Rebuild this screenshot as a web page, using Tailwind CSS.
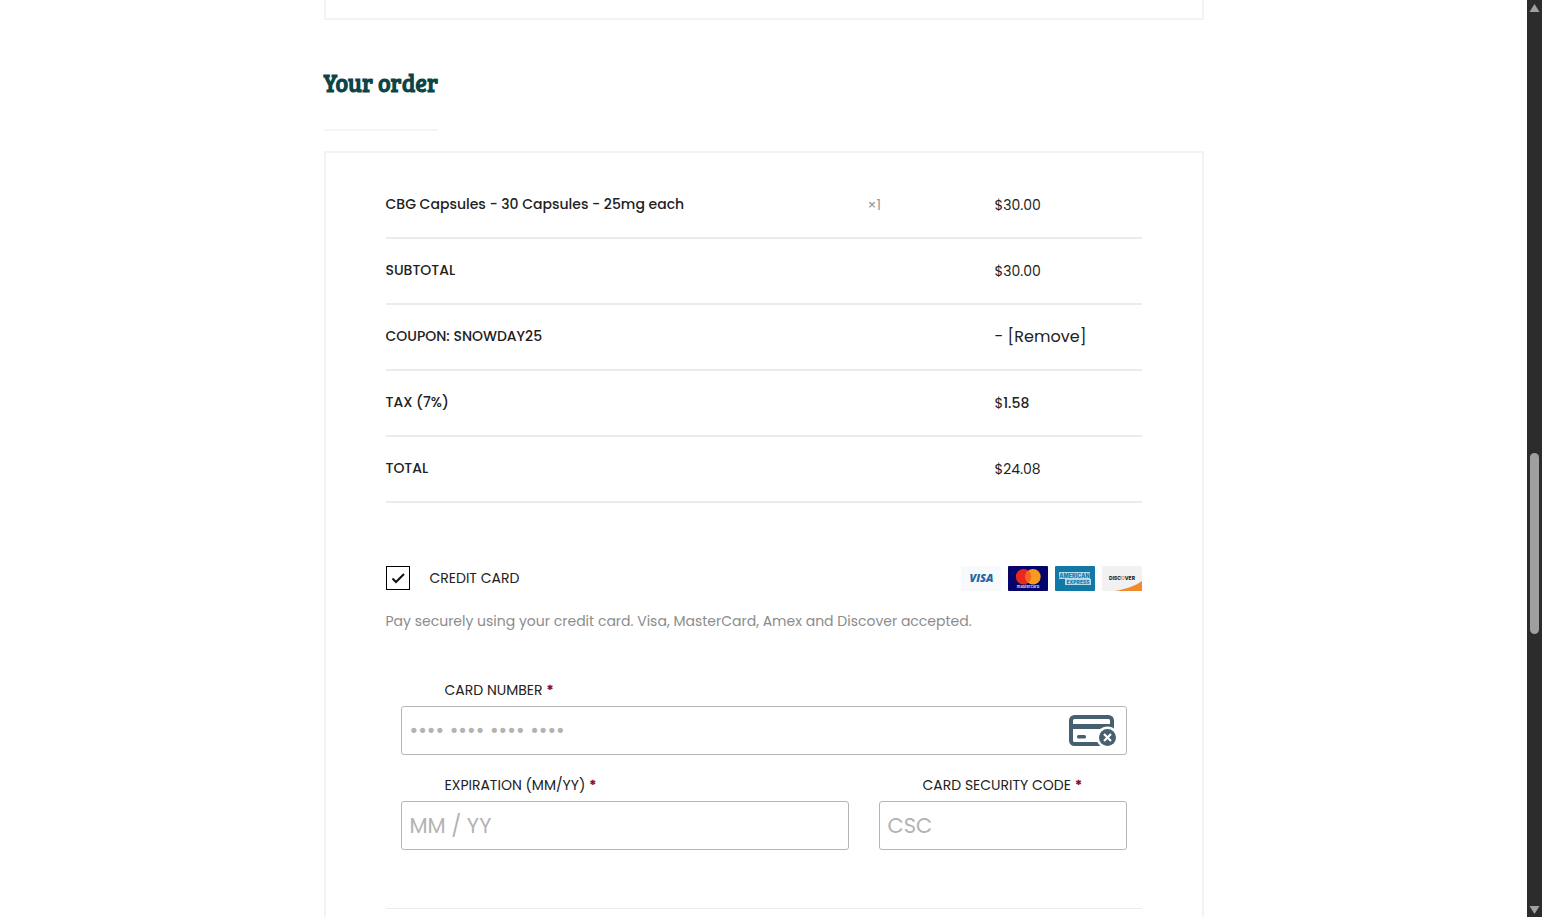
<!DOCTYPE html>
<html lang="en">
<head>
    <meta charset="UTF-8">
    <meta name="viewport" content="width=device-width, initial-scale=1.0">
    <title>Checkout</title>
    <script src="https://cdn.jsdelivr.net/npm/@tailwindcss/browser@4"></script>
</head>
<body class="flex h-screen overflow-hidden bg-white font-[Poppins,Inter,sans-serif] text-[14px] leading-6 text-[#222]">
    <main class="min-w-0 flex-1 overflow-hidden">
        <div class="mx-auto max-w-[880px]">
            <!-- End of the billing box -->
            <div class="h-5 border-2 border-t-0 border-[#f3f3f3]"></div>

            <h2 class="mt-[47px] inline-block border-b-2 border-[#f5f5f5] pb-[30px] font-['Bree_Serif','DejaVu_Sans',sans-serif] text-[24px] leading-8 font-bold text-[#0d4547]">Your order</h2>

            <!-- Order review -->
            <div class="mt-5 border-2 border-[#f3f3f3] px-[60px] pt-[19px] pb-40">
                <table class="w-full table-fixed border-collapse text-left">
                    <colgroup>
                        <col>
                        <col class="w-[127px]">
                        <col class="w-[147px]">
                    </colgroup>
                    <tbody>
                        <tr class="h-[66px] border-b-2 border-[#ebebeb]">
                            <th scope="row" class="pb-0.5 font-medium">CBG Capsules - 30 Capsules - 25mg each</th>
                            <td class="text-[#999]">×1</td>
                            <td>$30.00</td>
                        </tr>
                        <tr class="h-[66px] border-b-2 border-[#ebebeb]">
                            <th scope="row" colspan="2" class="pb-0.5 font-medium uppercase">Subtotal</th>
                            <td>$30.00</td>
                        </tr>
                        <tr class="h-[66px] border-b-2 border-[#ebebeb]">
                            <th scope="row" colspan="2" class="pb-0.5 font-medium uppercase">Coupon: snowday25</th>
                            <td class="text-[16px]">- <a href="#">[Remove]</a></td>
                        </tr>
                        <tr class="h-[66px] border-b-2 border-[#ebebeb]">
                            <th scope="row" colspan="2" class="pb-0.5 font-medium uppercase">Tax (7%)</th>
                            <td>$<span class="font-medium">1.58</span></td>
                        </tr>
                        <tr class="h-[66px] border-b-2 border-[#ebebeb]">
                            <th scope="row" colspan="2" class="pb-0.5 font-medium uppercase">Total</th>
                            <td>$24.08</td>
                        </tr>
                    </tbody>
                </table>

                <!-- Payment method -->
                <div class="mt-[63px] flex items-start justify-between">
                    <label for="payment" class="flex items-center gap-5 uppercase">
                        <span class="grid size-6">
                            <input id="payment" type="checkbox" checked class="col-start-1 row-start-1 size-6 appearance-none border border-black">
                            <svg class="pointer-events-none col-start-1 row-start-1 size-6" viewBox="0 0 24 24" fill="none" stroke="#111" stroke-width="2">
                                <path d="M6.5 12.5l3.5 3.5 8-8" />
                            </svg>
                        </span>
                        Credit Card
                    </label>
                    <div class="flex gap-[7px]">
                        <svg class="h-[25px] w-10" viewBox="0 0 40 25" role="img" aria-label="Visa">
                            <rect width="40" height="25" rx="1" fill="#f8f9fa" />
                            <text x="20.5" y="16.3" text-anchor="middle" font-family="Open Sans, sans-serif" font-size="11" font-weight="800" font-style="italic" fill="#1f66a3">VISA</text>
                        </svg>
                        <svg class="h-[25px] w-10" viewBox="0 0 40 25" role="img" aria-label="Mastercard">
                            <rect width="40" height="25" rx="1" fill="#04046a" />
                            <circle cx="15.5" cy="10.7" r="7.7" fill="#e8281c" />
                            <circle cx="25" cy="10.7" r="7.7" fill="#f79a1f" />
                            <path d="M20.25 4.6a7.7 7.7 0 0 1 0 12.2a7.7 7.7 0 0 1 0-12.2z" fill="#f26522" />
                            <text x="20" y="22.4" text-anchor="middle" font-family="Inter, sans-serif" font-size="4" font-weight="700" fill="#d5d5ea">mastercard</text>
                        </svg>
                        <svg class="h-[25px] w-10" viewBox="0 0 40 25" role="img" aria-label="American Express">
                            <rect width="40" height="25" rx="1" fill="#1278a8" />
                            <path d="M4 6h31v7H4zM10 13h26v6H10z" fill="#b5dbe9" />
                            <text x="19.5" y="11.7" text-anchor="middle" font-family="Inter, sans-serif" font-size="5.5" font-weight="800" fill="#1278a8">AMERICAN</text>
                            <text x="23" y="18" text-anchor="middle" font-family="Inter, sans-serif" font-size="5" font-weight="800" fill="#1278a8">EXPRESS</text>
                        </svg>
                        <svg class="h-[25px] w-10" viewBox="0 0 40 25" role="img" aria-label="Discover">
                            <rect width="40" height="25" rx="1" fill="#f1f1f1" />
                            <path d="M40 15v10H13c11-2 20-5 27-10z" fill="#f08a2c" />
                            <text x="20" y="14.3" text-anchor="middle" font-family="Inter, sans-serif" font-size="5" font-weight="800" fill="#222">DISC<tspan fill="#f08a2c">O</tspan>VER</text>
                        </svg>
                    </div>
                </div>
                <p class="mt-[18px] text-[#8c8c8c]">Pay securely using your credit card. Visa, MasterCard, Amex and Discover accepted.</p>

                <!-- Card fields -->
                <div class="mt-[45px] grid grid-cols-[minmax(0,1fr)_248px] gap-x-[30px] gap-y-[18px] px-[15px]">
                    <div class="col-span-2">
                        <label for="cardNumber" class="block pb-1 pl-11 uppercase">Card number <span class="font-bold text-[#8a0d2b]">*</span></label>
                        <div class="flex h-[49px] items-center rounded-[3px] border border-[#b5b5b5] pr-[9px] pl-2">
                            <input id="cardNumber" type="text" inputmode="numeric" placeholder="•••• •••• •••• ••••" class="min-w-0 flex-1 text-[21px] outline-none placeholder:text-[#b3b3b3]">
                            <svg class="h-8 w-12" viewBox="0 0 48 32" fill="none" aria-hidden="true">
                                <rect x="2" y="2" width="41" height="27" rx="3.5" stroke="#46606f" stroke-width="4" />
                                <path d="M2 9h41v5H2z" fill="#46606f" />
                                <rect x="8" y="20" width="9" height="3.6" rx="1.5" fill="#46606f" />
                                <circle cx="38.5" cy="22.5" r="11" fill="#fff" />
                                <circle cx="38.5" cy="22.5" r="8.5" fill="#46606f" />
                                <path d="M35 19l7 7M42 19l-7 7" stroke="#fff" stroke-width="2.2" />
                            </svg>
                        </div>
                    </div>
                    <div>
                        <label for="expiry" class="block pb-1 pl-11 uppercase">Expiration (MM/YY) <span class="font-bold text-[#8a0d2b]">*</span></label>
                        <input id="expiry" type="text" placeholder="MM / YY" class="h-[49px] w-full rounded-[3px] border border-[#b5b5b5] px-2 text-[21px] outline-none placeholder:text-[#b3b3b3]">
                    </div>
                    <div>
                        <label for="csc" class="block pb-1 pl-11 uppercase">Card Security Code <span class="font-bold text-[#8a0d2b]">*</span></label>
                        <input id="csc" type="text" placeholder="CSC" class="h-[49px] w-full rounded-[3px] border border-[#b5b5b5] px-2 text-[21px] outline-none placeholder:text-[#b3b3b3]">
                    </div>
                </div>
                <hr class="mt-[58px] border-t border-[#ebebeb]">
            </div>
        </div>
    </main>

    <!-- Scrollbar -->
    <div class="flex w-[15px] flex-col bg-[#2c2c2c]" aria-hidden="true">
        <svg class="h-[17px] w-[15px]" viewBox="0 0 15 17"><path d="M7.5 4l5 8h-10z" fill="#a0a0a0" /></svg>
        <div class="flex-[436]"></div>
        <div class="mx-[3px] flex-[181] rounded-full bg-[#9f9f9f]"></div>
        <div class="flex-[266]"></div>
        <svg class="h-[17px] w-[15px]" viewBox="0 0 15 17"><path d="M2.5 6h10l-5 8z" fill="#a0a0a0" /></svg>
    </div>
</body>
</html>
